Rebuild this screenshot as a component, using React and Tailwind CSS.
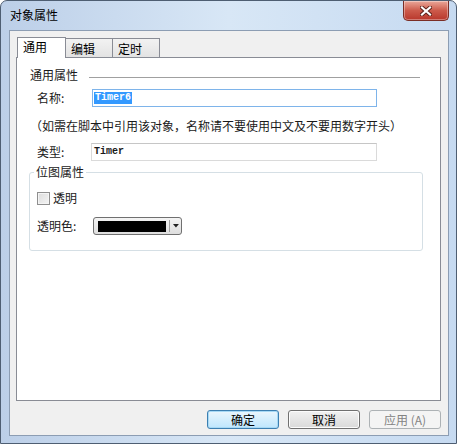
import React from "react";

const cjk = { fontFamily: '"Noto Sans CJK SC", "Noto Sans", sans-serif' };
const mono = { fontFamily: '"Liberation Mono", "DejaVu Sans Mono", monospace' };

function CloseButton() {
  return (
    <div className="mr-[7px] flex h-[20px] w-[46px] items-center justify-center rounded-b-[5px] border border-t-0 border-[#7a2e26] bg-gradient-to-b from-[#e9a79a] via-[#cc5a4b] to-[#b8362b] shadow-[inset_0_0_0_1px_rgba(255,255,255,0.35)]">
      <svg width="12" height="10" viewBox="0 0 12 10">
        <path d="M2 1.5 L10 8.5 M10 1.5 L2 8.5" stroke="#5a1f18" strokeWidth="4" strokeLinecap="square" />
        <path d="M2 1.5 L10 8.5 M10 1.5 L2 8.5" stroke="#ffffff" strokeWidth="2.2" strokeLinecap="square" />
      </svg>
    </div>
  );
}

function Tab({ label, active, w }) {
  if (active) {
    return (
      <div
        className={`relative z-10 -mb-px flex h-[21px] ${w} items-start border border-b-0 border-[#898c95] bg-white pl-[5px] pt-[1px] text-[12px] leading-[16px] text-black`}
      >
        {label}
      </div>
    );
  }
  return (
    <div
      className={`flex h-[19px] ${w} items-start border border-b-0 border-l-0 border-[#898c95] bg-gradient-to-b from-[#f2f2f2] to-[#e3e3e3] pl-[5px] pt-[2px] text-[12px] leading-[16px] text-black`}
    >
      {label}
    </div>
  );
}

function Button({ children, kind }) {
  const base = "flex h-[19px] w-[72px] items-center justify-center rounded-[3px] border text-[12px] leading-[16px]";
  if (kind === "default") {
    return (
      <div className={`${base} border-[#3c7fb1] bg-gradient-to-b from-[#eaf6fd] to-[#bee6fd] text-black shadow-[inset_0_0_0_1px_#a7d9f5]`}>
        {children}
      </div>
    );
  }
  if (kind === "disabled") {
    return <div className={`${base} border-[#adb2b5] bg-[#f4f4f4] text-[#838383]`}>{children}</div>;
  }
  return (
    <div className={`${base} border-[#707070] bg-gradient-to-b from-[#f2f2f2] to-[#d9d9d9] text-black shadow-[inset_0_0_0_1px_#fcfcfc]`}>
      {children}
    </div>
  );
}

export default function App() {
  return (
    <div className="h-[444px] w-[457px] bg-white" style={cjk}>
      <div className="flex h-[444px] w-[457px] flex-col rounded-t-[7px] border border-[#4e5e72] bg-gradient-to-r from-[#bccfe8] via-[#d8e7f6] to-[#c6daf1]">
        {/* 标题栏 */}
        <div className="flex h-[29px] items-start justify-between">
          <span className="pl-[9px] pt-[6px] text-[12px] leading-[16px] text-black">对象属性</span>
          <CloseButton />
        </div>

        {/* 客户区 */}
        <div className="ml-[8px] mr-[7px] flex flex-1 flex-col border border-[#8c9db3] bg-[#f0f0f0] pl-[6px] pr-[7px] pt-[6px]">
          <div className="flex items-end pl-px">
            <Tab label="通用" active w="w-[49px]" />
            <Tab label="编辑" w="w-[47px]" />
            <Tab label="定时" w="w-[47px]" />
          </div>

          <div className="flex h-[344px] flex-col border border-[#898c95] bg-white text-[12px] leading-[16px] text-[#1a1a1a]">
            {/* 通用属性 */}
            <div className="flex items-center pl-[13px] pr-[20px] pt-[9px]">
              <span>通用属性</span>
              <div className="ml-[11px] mt-[4px] h-px flex-1 bg-[#a0a0a0]" />
            </div>

            <div className="mt-[6px] flex items-center pl-[20px]">
              <span className="w-[55px]">名称:</span>
              <div className="flex h-[18px] w-[285px] items-center border border-[#7eb4ea] bg-white pl-[1px]">
                <span className="bg-[#3399ff] px-px text-[10px] font-semibold leading-[12px] text-white" style={mono}>
                  Timer6
                </span>
              </div>
            </div>

            <div className="mt-[11px] pl-[13px]">（如需在脚本中引用该对象，名称请不要使用中文及不要用数字开头）</div>

            <div className="mt-[9px] flex items-center pl-[20px]">
              <span className="w-[54px]">类型:</span>
              <div className="flex h-[18px] w-[286px] items-center border border-[#dadada] border-t-[#c6c6c6] bg-white pl-[2px]">
                <span className="text-[10px] font-semibold leading-[12px]" style={mono}>
                  Timer
                </span>
              </div>
            </div>

            {/* 位图属性 */}
            <fieldset className="ml-[12px] mr-[17px] mt-[3px] h-[87px] rounded-[3px] border border-[#d5dfe5] pl-[7px]">
              <legend className="ml-[-3px] px-[2px]">位图属性</legend>
              <div className="mt-[10px] flex items-center">
                <div className="h-[13px] w-[13px] border border-[#8f8f8f] bg-gradient-to-br from-[#dcdcdc] to-[#f4f4f4] shadow-[inset_0_0_0_1px_#f4f4f4]" />
                <span className="ml-[3px]">透明</span>
              </div>
              <div className="mt-[11px] flex items-center">
                <span className="w-[56px]">透明色:</span>
                <div className="flex h-[18px] w-[89px] items-center rounded-[3px] border border-[#707070] bg-gradient-to-b from-[#f4f4f4] to-[#dedede] pl-[4px] pr-[2px]">
                  <div className="h-[11px] w-[69px] bg-black" />
                  <div className="ml-[3px] h-[12px] w-px bg-[#a0a0a0]" />
                  <svg className="ml-[3px]" width="6" height="4" viewBox="0 0 6 4">
                    <path d="M0 0 H6 L3 3.5 Z" fill="#222" />
                  </svg>
                </div>
              </div>
            </fieldset>
          </div>

          <div className="flex justify-end gap-[9px] pt-[9px]">
            <Button kind="default">确定</Button>
            <Button>取消</Button>
            <Button kind="disabled">应用 (A)</Button>
          </div>
        </div>
        <div className="h-[7px]" />
      </div>
    </div>
  );
}
